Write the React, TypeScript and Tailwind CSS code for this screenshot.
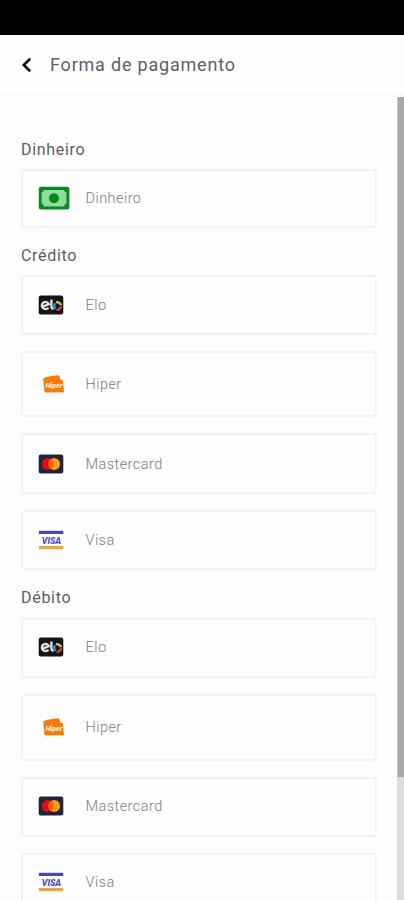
import type { ReactNode } from "react";

type Brand = "cash" | "elo" | "hiper" | "mastercard" | "visa";

interface PaymentOption {
  brand: Brand;
  label: string;
  rowClass: string;
}

interface PaymentGroup {
  title: string;
  titleClass: string;
  listClass: string;
  options: PaymentOption[];
}

const groups: PaymentGroup[] = [
  {
    title: "Dinheiro",
    titleClass: "h-[31px] pt-px",
    listClass: "",
    options: [{ brand: "cash", label: "Dinheiro", rowClass: "h-[59px] pb-px" }],
  },
  {
    title: "Crédito",
    titleClass: "mt-4 h-[31px] pt-px",
    listClass: "gap-4",
    options: [
      { brand: "elo", label: "Elo", rowClass: "h-[60px]" },
      { brand: "hiper", label: "Hiper", rowClass: "h-[66px]" },
      { brand: "mastercard", label: "Mastercard", rowClass: "h-[61px]" },
      { brand: "visa", label: "Visa", rowClass: "h-[60px]" },
    ],
  },
  {
    title: "Débito",
    titleClass: "mt-4 h-[32px] pt-px",
    listClass: "gap-4",
    options: [
      { brand: "elo", label: "Elo", rowClass: "h-[60px] pb-0.5" },
      { brand: "hiper", label: "Hiper", rowClass: "h-[67px] pb-px" },
      { brand: "mastercard", label: "Mastercard", rowClass: "h-[60px] pb-0.5" },
      { brand: "visa", label: "Visa", rowClass: "h-[60px] pb-0.5" },
    ],
  },
];

function CashIcon() {
  return (
    <svg width="32" height="24" viewBox="0 0 32 24">
      <rect x="0.8" y="0.8" width="30.6" height="22.8" rx="2.4" fill="#078b1c" />
      <path d="M6 4H26Q26.4 6 28.4 6.6V17.6Q26.4 18.4 26 20.4H6Q5.6 18.4 3.6 17.6V6.6Q5.6 6 6 4Z" fill="#8fdc9c" />
      <circle cx="16" cy="12.2" r="5" fill="#078b1c" />
    </svg>
  );
}

function EloIcon() {
  return (
    <svg width="26" height="20" viewBox="0 0 26 20">
      <rect x="0.7" y="0.6" width="24.6" height="18.8" rx="2.2" fill="#141414" />
      <path d="M3.8 12.2L10.8 9.2A3.6 3.6 0 1 0 10.4 12.6" fill="none" stroke="#e2e2e2" strokeWidth="2.4" />
      <path d="M13.4 4.4V11.6Q13.5 13.4 15.4 14.2" fill="none" stroke="#dcdcdc" strokeWidth="2.4" />
      <path d="M17.6 13.8A4 4 0 0 1 17.2 8.2" fill="none" stroke="#3296c6" strokeWidth="2.4" />
      <path d="M18 7.4A4 4 0 0 1 23 10.2" fill="none" stroke="#e8bd35" strokeWidth="2.4" />
      <path d="M23 11.4A4 4 0 0 1 18.6 14.8" fill="none" stroke="#dc422b" strokeWidth="2.4" />
    </svg>
  );
}

function HiperIcon() {
  return (
    <svg width="26" height="20" viewBox="0 0 26 20">
      <path d="M5.2 4.5Q10 2 19.5 1.3Q21 1.2 21.5 2.6L22.3 5.2L25 6.8L26 18.2L8 18.4Q6.6 18.4 6.3 17Z" fill="#f97b05" />
      <text x="7.4" y="14.2" fill="#fff1e2" fontFamily="Roboto, sans-serif" fontSize="7" fontWeight="900" fontStyle="italic" textLength="17" lengthAdjust="spacingAndGlyphs">
        Hiper
      </text>
    </svg>
  );
}

function MastercardIcon() {
  return (
    <svg width="26" height="20" viewBox="0 0 26 20">
      <rect x="0.7" y="0.6" width="24.6" height="18.8" rx="2.2" fill="#202638" />
      <circle cx="9.7" cy="10" r="5.9" fill="#e80b17" />
      <circle cx="16.2" cy="10" r="5.9" fill="#f79d1c" />
      <path d="M12.95 5.1A5.9 5.9 0 0 1 12.95 14.9A5.9 5.9 0 0 1 12.95 5.1Z" fill="#fc5b0b" />
    </svg>
  );
}

function VisaIcon() {
  return (
    <svg width="26" height="20" viewBox="0 0 26 20">
      <rect x="0.9" y="0.8" width="24.4" height="3.2" fill="#4545bd" />
      <rect x="0.9" y="16" width="24.4" height="3.2" fill="#eaa63c" />
      <text x="3.8" y="13.6" fill="#5149c6" fontFamily="Roboto, sans-serif" fontSize="9.4" fontWeight="900" fontStyle="italic" textLength="19.4" lengthAdjust="spacingAndGlyphs">
        VISA
      </text>
    </svg>
  );
}

const icons: Record<Brand, ReactNode> = {
  cash: <CashIcon />,
  elo: <EloIcon />,
  hiper: <HiperIcon />,
  mastercard: <MastercardIcon />,
  visa: <VisaIcon />,
};

// Single selectable payment row
function PaymentRow({ option }: { option: PaymentOption }) {
  return (
    <button
      type="button"
      className={`flex w-full shrink-0 items-center rounded-[4px] border-2 border-[#f3f3f3] bg-[#fefefe] pl-[15px] text-left ${option.rowClass}`}
    >
      <span className="w-[47.5px] shrink-0">{icons[option.brand]}</span>
      <span className="pt-0.5 text-[14.5px] leading-5 font-light tracking-[0.45px] text-[#7c7c7c]">{option.label}</span>
    </button>
  );
}

export default function App() {
  return (
    <div className="flex h-[900px] w-[404px] flex-col overflow-hidden bg-[#fdfdfd] font-[Roboto,sans-serif]">
      <div className="h-[35px] shrink-0 bg-black" />

      <header className="flex h-[62px] shrink-0 items-center border-b-2 border-[#f7f7f7] bg-[#fefefe] pl-[21px]">
        <button type="button" aria-label="Voltar">
          <svg width="12" height="16" viewBox="0 0 12 16" fill="none" stroke="#111111" strokeWidth="2.6">
            <path d="M9.2 1.8L2.8 8L9.2 14.2" />
          </svg>
        </button>
        <h1 className="ml-[17px] text-[18px] leading-6 tracking-[0.8px] text-[#5f5f63]">Forma de pagamento</h1>
      </header>

      <div className="flex min-h-0 flex-1">
        <main className="flex min-w-0 flex-1 flex-col overflow-hidden pr-5 pl-[21px] pt-[41px]">
          {groups.map((group) => (
            <section key={group.title} className="shrink-0">
              <h2 className={`text-[16px] leading-[22px] tracking-[0.7px] text-[#5d5d61] ${group.titleClass}`}>
                {group.title}
              </h2>
              <div className={`flex flex-col ${group.listClass}`}>
                {group.options.map((option) => (
                  <PaymentRow key={option.label} option={option} />
                ))}
              </div>
            </section>
          ))}
        </main>

        {/* Scroll track */}
        <div className="w-[7px] shrink-0 bg-[#dcdcdc]">
          <div className="h-[680px] border-l border-[#c4c4c4] bg-[#a9a9a9]" />
        </div>
      </div>
    </div>
  );
}
